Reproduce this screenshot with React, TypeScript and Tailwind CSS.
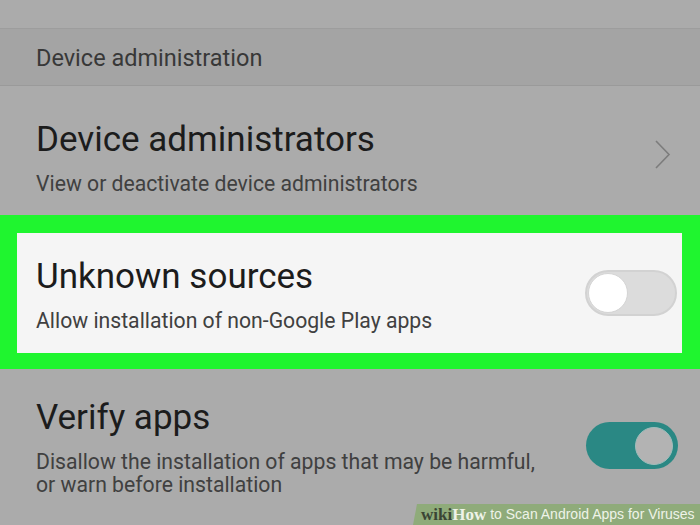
export default function App() {
  return (
    <div className="relative w-[700px] h-[525px] overflow-hidden bg-[#ababab] font-['Roboto',sans-serif]">
      <div className="h-[29px] border-b border-[#9d9d9d]" />
      <div className="h-[57px] bg-[#a4a4a4] border-b border-[#9a9a9a] flex items-center px-[36px] pt-[4px]">
        <span className="text-[23.5px] text-[#383838]">Device administration</span>
      </div>

      <div className="h-[129px] flex items-start pl-[36px] pr-[28px] pt-[34px]">
        <div className="flex-1 flex flex-col gap-[10px]">
          <div className="text-[35px] leading-[40px] text-[#1c1c1c]">Device administrators</div>
          <div className="text-[21.2px] leading-[28px] text-[#404040]">View or deactivate device administrators</div>
        </div>
        <svg className="mt-[20px]" width="18" height="30" viewBox="0 0 18 30">
          <path d="M2 1 L15 14.5 L2 28" fill="none" stroke="#7c7c7c" strokeWidth="1.6" />
        </svg>
      </div>

      <div className="bg-[#1ff52f] pt-[18px] pb-[16px] pl-[17px] pr-[18px]">
        <div className="h-[120px] bg-[#f5f5f5] flex items-center pl-[19px] pr-[5px]">
          <div className="flex-1 flex flex-col gap-[10px] pt-[6px]">
            <div className="text-[35px] leading-[40px] text-[#1c1c1c]">Unknown sources</div>
            <div className="text-[21.2px] leading-[28px] text-[#404040]">Allow installation of non-Google Play apps</div>
          </div>
          <div className="w-[92px] h-[46px] rounded-full bg-[#dcdcdc] border-2 border-[#d2d2d2] flex items-center px-[1px]">
            <div className="w-[40px] h-[40px] rounded-full bg-white border border-[#d4d4d4]" />
          </div>
        </div>
      </div>

      <div className="flex items-center pl-[36px] pr-[22px] pt-[29px]">
        <div className="flex-1 flex flex-col gap-[12px]">
          <div className="text-[35px] leading-[40px] text-[#1c1c1c]">Verify apps</div>
          <div className="text-[21.2px] leading-[23px] text-[#404040]">
            Disallow the installation of apps that may be harmful,
            <br />
            or warn before installation
          </div>
        </div>
        <div className="w-[92px] h-[47px] rounded-full bg-[#2a8884] flex items-center justify-end px-[5px] mb-[3px]">
          <div className="w-[38px] h-[38px] rounded-full bg-[#b3b3b3] border border-[#9fbdbb]" />
        </div>
      </div>

      <div className="absolute right-0 bottom-0 w-[287px] h-[21px] bg-[#8fab7a] [clip-path:polygon(4px_0,100%_0,100%_100%,0_100%)] flex items-center pl-[8px] whitespace-nowrap">
        <span className="font-['Liberation_Serif',serif] font-bold text-[17px] text-[#3a4535]">wiki</span>
        <span className="font-['Liberation_Serif',serif] font-bold text-[17px] text-[#eef3e8]">How</span>
        <span className="font-['Liberation_Sans',sans-serif] text-[14px] text-[#eef3e8] ml-[4px]">to Scan Android Apps for Viruses</span>
      </div>
    </div>
  )
}
